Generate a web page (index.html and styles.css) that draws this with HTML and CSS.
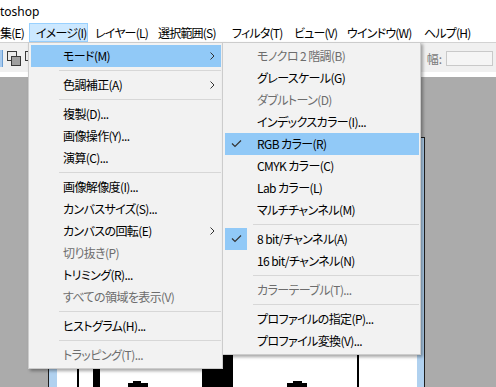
FILE: index.html
```html
<!DOCTYPE html>
<html lang="ja">
  <head>
    <meta charset="utf-8" />
    <meta name="viewport" content="width=device-width,initial-scale=1.0" />
    <title>Photoshop - イメージ</title>
    <link rel="stylesheet" href="styles.css">
  </head>
  <body>
    <div id="app">
      <div class="titlebar"><span class="title">toshop</span></div>

      <ul class="menubar">
        <li class="first">集(E)</li>
        <li class="open">イメージ(I)</li>
        <li>レイヤー(L)</li>
        <li>選択範囲(S)</li>
        <li>フィルタ(T)</li>
        <li>ビュー(V)</li>
        <li>ウインドウ(W)</li>
        <li>ヘルプ(H)</li>
      </ul>

      <div class="optionsbar">
        <div class="tools">
          <span class="tool-sel"></span>
          <svg class="tool" width="14" height="15" viewBox="0 0 14 15">
            <rect x="0.5" y="0.5" width="9" height="9" fill="#ececec" stroke="#3a3a3a" />
            <rect x="4.5" y="5.5" width="9" height="9" fill="#a0a0a0" stroke="#3a3a3a" />
          </svg>
          <svg class="tool" width="14" height="15" viewBox="0 0 14 15">
            <rect x="0.5" y="0.5" width="9" height="9" fill="#ececec" stroke="#3a3a3a" />
            <rect x="4.5" y="5.5" width="9" height="9" fill="#ffffff" stroke="#3a3a3a" />
          </svg>
        </div>
        <div class="field">
          <label>幅:</label>
          <input type="text" />
        </div>
      </div>
      <div class="strip"></div>

      <div class="workspace">
        <div class="docwin">
          <svg class="canvas" width="360" height="300" viewBox="0 0 360 300">
            <rect x="0" y="0" width="360" height="300" fill="#fff" />
            <rect x="20" y="0" width="2" height="300" fill="#000" />
            <rect x="36" y="0" width="7" height="300" fill="#000" />
            <rect x="71" y="237" width="20" height="60" fill="#000" />
            <rect x="76" y="235" width="8" height="3" fill="#000" />
            <rect x="145" y="0" width="31" height="300" fill="#000" />
            <rect x="230" y="237" width="20" height="60" fill="#000" />
            <rect x="236" y="235" width="9" height="3" fill="#000" />
            <rect x="300" y="0" width="2" height="300" fill="#000" />
          </svg>
        </div>
      </div>

      <!-- イメージ menu -->
      <ul class="menu main">
        <li class="hl">モード(M)<span class="arrow"><svg width="5" height="8" viewBox="0 0 5 8"><path d="M0.5 0.5 L4 4 L0.5 7.5" fill="none" stroke="#333" /></svg></span></li>
        <li class="sep"></li>
        <li>色調補正(A)<span class="arrow"><svg width="5" height="8" viewBox="0 0 5 8"><path d="M0.5 0.5 L4 4 L0.5 7.5" fill="none" stroke="#333" /></svg></span></li>
        <li class="sep"></li>
        <li>複製(D)...</li>
        <li>画像操作(Y)...</li>
        <li>演算(C)...</li>
        <li class="sep"></li>
        <li>画像解像度(I)...</li>
        <li>カンバスサイズ(S)...</li>
        <li>カンバスの回転(E)<span class="arrow"><svg width="5" height="8" viewBox="0 0 5 8"><path d="M0.5 0.5 L4 4 L0.5 7.5" fill="none" stroke="#333" /></svg></span></li>
        <li class="off">切り抜き(P)</li>
        <li>トリミング(R)...</li>
        <li class="off">すべての領域を表示(V)</li>
        <li class="sep"></li>
        <li>ヒストグラム(H)...</li>
        <li class="sep"></li>
        <li class="off">トラッピング(T)...</li>
      </ul>

      <!-- モード submenu -->
      <ul class="menu sub">
        <li class="off">モノクロ 2 階調(B)</li>
        <li>グレースケール(G)</li>
        <li class="off">ダブルトーン(D)</li>
        <li>インデックスカラー(I)...</li>
        <li class="hl"><span class="check"><svg width="22" height="22" viewBox="0 0 22 22"><path d="M7 10.5 L10 13.5 L16 7.5" fill="none" stroke="#333" stroke-width="1.2" /></svg></span>RGB カラー(R)</li>
        <li>CMYK カラー(C)</li>
        <li>Lab カラー(L)</li>
        <li>マルチチャンネル(M)</li>
        <li class="sep"></li>
        <li><span class="check"><svg width="22" height="22" viewBox="0 0 22 22"><path d="M7 10.5 L10 13.5 L16 7.5" fill="none" stroke="#333" stroke-width="1.2" /></svg></span>8 bit/チャンネル(A)</li>
        <li>16 bit/チャンネル(N)</li>
        <li class="sep"></li>
        <li class="off">カラーテーブル(T)...</li>
        <li class="sep"></li>
        <li>プロファイルの指定(P)...</li>
        <li>プロファイル変換(V)...</li>
      </ul>
    </div>
  </body>
</html>
```

FILE: styles.css
```css
* {
  box-sizing: border-box;
}

body {
  margin: 0;
  font-family: "Noto Sans CJK JP", "Noto Sans", sans-serif;
  font-size: 12px;
  font-feature-settings: "palt";
  color: #000;
  background: #ababab;
  overflow: hidden;
}

#app {
  position: relative;
  width: 496px;
  height: 387px;
  overflow: hidden;
  display: flex;
  flex-direction: column;
}

/* window title + menu bar */
.titlebar {
  height: 22px;
  flex-shrink: 0;
  background: #fff;
  line-height: 22px;
  white-space: nowrap;
}
.title {
  font-family: "Noto Sans", sans-serif;
  font-size: 12px;
}

.menubar {
  list-style: none;
  margin: 0;
  padding: 1px 0 0 0;
  height: 20px;
  flex-shrink: 0;
  background: #fff;
  display: flex;
  white-space: nowrap;
  letter-spacing: -0.8px;
}
.menubar li {
  flex-shrink: 0;
  height: 19px;
  line-height: 17px;
  padding: 0 0 0 6px;
  border: 1px solid transparent;
}
.menubar li:nth-child(1) { width: 29px; padding-left: 0; border-left: 0; }
.menubar li:nth-child(2) { width: 59px; }
.menubar li:nth-child(3) { width: 63px; }
.menubar li:nth-child(4) { width: 74px; }
.menubar li:nth-child(5) { width: 62px; }
.menubar li:nth-child(6) { width: 53px; }
.menubar li:nth-child(7) { width: 77px; }
.menubar li:nth-child(8) { width: 59px; }
.menubar li.open {
  background: #cce8ff;
  border-color: #99d1ff;
}

/* options bar */
.optionsbar {
  height: 30px;
  flex-shrink: 0;
  background: #f0f0f0;
  border-top: 1px solid #d2d2d2;
  display: flex;
  align-items: center;
  justify-content: space-between;
}
.tools {
  display: flex;
  align-items: center;
  gap: 4px;
  padding-top: 2px;
}
.tool-sel {
  width: 3px;
  height: 17px;
  background: #a8cbef;
  border-right: 1px solid #6c9fd4;
}
.field {
  display: flex;
  align-items: center;
  padding-right: 3px;
  padding-top: 2px;
}
.field label {
  color: #7a7a7a;
  margin-right: 4px;
}
.field input {
  width: 47px;
  height: 15px;
  border: 1px solid #c9c9c9;
  background: #f5f5f5;
  padding: 0;
  outline: none;
}

.strip {
  height: 5px;
  flex-shrink: 0;
  background: #fff;
}

/* document area */
.workspace {
  flex: 1;
  background: #ababab;
}
.docwin {
  margin: 60px 0 0 48px;
  width: 377px;
  height: 400px;
  padding: 8px 7px 0 8px;
  background: #b0d1ef;
  border: 1px solid #1e1e1e;
  border-bottom: none;
}
.canvas {
  display: block;
}

/* drop-down menus */
.menu {
  position: absolute;
  top: 42px;
  list-style: none;
  margin: 0;
  padding: 2px 1px 2px 2px;
  background: #f2f2f2;
  border: 1px solid #cccccc;
  box-shadow: 2px 2px 3px rgba(0, 0, 0, 0.35);
  white-space: nowrap;
  letter-spacing: -0.6px;
}
.menu.main {
  left: 28px;
  width: 195px;
}
.menu.sub {
  left: 222px;
  width: 199px;
  z-index: 2;
}
.menu li {
  position: relative;
  display: flex;
  align-items: center;
  height: 22px;
  line-height: 22px;
  padding-left: 32px;
}
.menu li.hl {
  background: #91c9f7;
}
.menu li.off {
  color: #6d6d6d;
}
.menu li.sep {
  height: 7px;
  padding: 0;
  margin-left: 28px;
}
.menu li.sep::after {
  content: "";
  flex: 1;
  height: 1px;
  background: #d7d7d7;
}
.arrow {
  margin-left: auto;
  margin-right: 6px;
  display: flex;
}
.check {
  position: absolute;
  left: 0;
  top: 0;
  width: 22px;
  height: 22px;
  background: #91c9f7;
  display: flex;
}
```
